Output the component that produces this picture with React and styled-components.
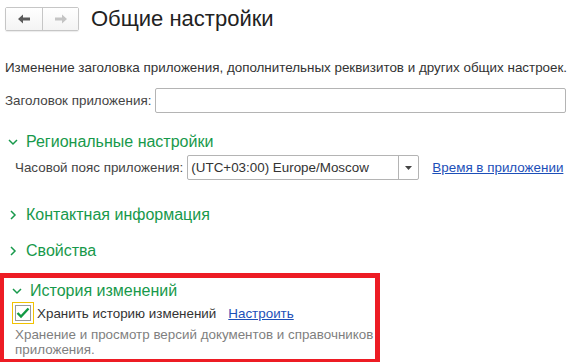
import React, { useState } from "react";
import styled, { createGlobalStyle } from "styled-components";

const GlobalStyle = createGlobalStyle`
  body {
    margin: 0;
    background: #fff;
    font-family: "Liberation Sans", Arial, sans-serif;
    color: #333;
  }
`;

const Page = styled.div`
  width: 573px;
  height: 362px;
  overflow: hidden;
  padding: 7px 0 0 0;
  box-sizing: border-box;
`;

const Header = styled.div`
  display: flex;
  align-items: center;
  gap: 12px;
  padding-left: 5px;
  height: 24px;
`;

const NavGroup = styled.div`
  display: flex;
  border: 1px solid #c6c6c6;
  border-radius: 2px;
  height: 22px;
  box-shadow: 0 1px 1px rgba(0, 0, 0, 0.08);
`;

const NavButton = styled.button`
  width: 36px;
  height: 22px;
  border: none;
  padding: 0;
  background: linear-gradient(#ffffff, #f4f4f4);
  display: flex;
  align-items: center;
  justify-content: center;
  & + & {
    border-left: 1px solid #c6c6c6;
  }
`;

const Title = styled.h1`
  margin: 0;
  font-size: 22px;
  font-weight: normal;
  color: #222;
`;

const Description = styled.p`
  margin: 29px 0 0 5px;
  font-size: 13.4px;
  color: #333;
`;

const FieldRow = styled.div`
  display: flex;
  align-items: center;
  gap: 4px;
  padding-left: ${(p) => p.$indent || 5}px;
  padding-right: 7px;
  margin-top: ${(p) => p.$top || 0}px;
`;

const Label = styled.label`
  font-size: 13.4px;
  color: #444;
  white-space: nowrap;
`;

const TextInput = styled.input`
  flex: 1;
  height: 25px;
  box-sizing: border-box;
  border: 1px solid #b4b4b4;
  border-radius: 2px;
  font: inherit;
  font-size: 13px;
`;

const Select = styled.div`
  display: flex;
  width: 232px;
  height: 25px;
  box-sizing: border-box;
  border: 1px solid #b4b4b4;
  border-radius: 2px;
`;

const SelectValue = styled.div`
  flex: 1;
  display: flex;
  align-items: center;
  padding-left: 3px;
  font-size: 13.4px;
  color: #333;
`;

const SelectButton = styled.div`
  width: 19px;
  border-left: 1px solid #b4b4b4;
  display: flex;
  align-items: center;
  justify-content: center;
`;

const Link = styled.a`
  font-size: 13.4px;
  color: #1c4fb8;
  text-decoration: underline;
  margin-left: ${(p) => p.$gap || 0}px;
  cursor: pointer;
  white-space: nowrap;
`;

const Group = styled.section`
  margin-top: ${(p) => p.$top || 0}px;
`;

const GroupHeader = styled.div`
  display: flex;
  align-items: center;
  gap: 8px;
  padding-left: 8px;
  height: 20px;
  font-size: 16px;
  color: #17994b;
  cursor: pointer;
`;

const Highlight = styled.div`
  margin-top: 12px;
  width: 380px;
  box-sizing: border-box;
  border: 5px solid #ed1c24;
  border-left-width: 4px;
  padding: 3px 0 2px 0;
`;

const CheckRow = styled.div`
  display: flex;
  align-items: center;
  padding-left: 8px;
  margin-top: 1px;
  font-size: 13.4px;
  color: #333;
`;

const CheckFrame = styled.span`
  width: 20px;
  height: 20px;
  border: 1px solid #f2c200;
  display: flex;
  align-items: center;
  justify-content: center;
  margin-right: 3px;
`;

const CheckBox = styled.span`
  width: 14px;
  height: 14px;
  border: 1px solid #9a9a9a;
  background: #fff;
  display: flex;
  align-items: center;
  justify-content: center;
`;

const Note = styled.p`
  margin: 3px 0 0 11px;
  font-size: 13.4px;
  line-height: 15px;
  color: #7f7f7f;
  width: 360px;
`;

const Chevron = ({ open }) => (
  <svg width="10" height="10" viewBox="0 0 10 10">
    {open ? (
      <path d="M1 3 L5 7 L9 3" fill="none" stroke="#17994b" strokeWidth="1.5" />
    ) : (
      <path d="M3 1 L7 5 L3 9" fill="none" stroke="#17994b" strokeWidth="1.5" />
    )}
  </svg>
);

const Arrow = ({ dir, color }) => (
  <svg width="12" height="10" viewBox="0 0 12 10">
    {dir === "left" ? (
      <path d="M0 5 L5 0.5 V3.5 H12 V6.5 H5 V9.5 Z" fill={color} />
    ) : (
      <path d="M12 5 L7 0.5 V3.5 H0 V6.5 H7 V9.5 Z" fill={color} />
    )}
  </svg>
);

const App = () => {
  const [keepHistory, setKeepHistory] = useState(true);

  return (
    <Page>
      <GlobalStyle />
      <Header>
        <NavGroup>
          <NavButton>
            <Arrow dir="left" color="#5a5a5a" />
          </NavButton>
          <NavButton>
            <Arrow dir="right" color="#c4c4c4" />
          </NavButton>
        </NavGroup>
        <Title>Общие настройки</Title>
      </Header>

      <Description>
        Изменение заголовка приложения, дополнительных реквизитов и других общих настроек.
      </Description>

      <FieldRow $top={13}>
        <Label>Заголовок приложения:</Label>
        <TextInput type="text" />
      </FieldRow>

      <Group $top={19}>
        <GroupHeader>
          <Chevron open />
          Региональные настройки
        </GroupHeader>
        <FieldRow $indent={15} $top={3}>
          <Label>Часовой пояс приложения:</Label>
          <Select>
            <SelectValue>(UTC+03:00) Europe/Moscow</SelectValue>
            <SelectButton>
              <svg width="7" height="4" viewBox="0 0 7 4">
                <path d="M0 0 H7 L3.5 4 Z" fill="#444" />
              </svg>
            </SelectButton>
          </Select>
          <Link $gap={9}>Время в приложении</Link>
        </FieldRow>
      </Group>

      <Group $top={25}>
        <GroupHeader>
          <Chevron />
          Контактная информация
        </GroupHeader>
      </Group>

      <Group $top={16}>
        <GroupHeader>
          <Chevron />
          Свойства
        </GroupHeader>
      </Group>

      <Highlight>
        <GroupHeader>
          <Chevron open />
          История изменений
        </GroupHeader>
        <CheckRow>
          <CheckFrame onClick={() => setKeepHistory(!keepHistory)}>
            <CheckBox>
              {keepHistory && (
                <svg width="14" height="12" viewBox="0 0 14 12">
                  <path d="M1.5 6 L5 9.5 L12.5 1.5" fill="none" stroke="#129a43" strokeWidth="2.4" />
                </svg>
              )}
            </CheckBox>
          </CheckFrame>
          Хранить историю изменений
          <Link $gap={12}>Настроить</Link>
        </CheckRow>
        <Note>Хранение и просмотр версий документов и справочников приложения.</Note>
      </Highlight>
    </Page>
  );
};

export default App;
